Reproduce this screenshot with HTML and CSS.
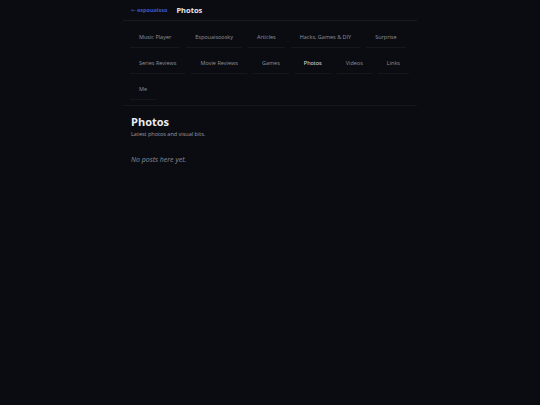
FILE: index.html
```html
<!DOCTYPE html>
<html lang="en">
<head>
<meta charset="utf-8">
<title>Photos</title>
<link rel="stylesheet" href="styles.css">
</head>
<body>
<div class="page">
  <header class="topbar">
    <a class="back" href="#"><span class="arrow">←</span> espouaisso</a>
    <span class="crumb">Photos</span>
  </header>
  <nav class="nav">
    <a class="nav-item" href="#">Music Player</a>
    <a class="nav-item" href="#">Espouaisoosky</a>
    <a class="nav-item" href="#">Articles</a>
    <a class="nav-item" href="#">Hacks, Games &amp; DIY</a>
    <a class="nav-item" href="#">Surprise</a>
    <a class="nav-item" href="#">Series Reviews</a>
    <a class="nav-item" href="#">Movie Reviews</a>
    <a class="nav-item" href="#">Games</a>
    <a class="nav-item active" href="#">Photos</a>
    <a class="nav-item" href="#">Videos</a>
    <a class="nav-item" href="#">Links</a>
    <a class="nav-item" href="#">Me</a>
  </nav>
  <main class="content">
    <h1 class="title">Photos</h1>
    <p class="subtitle">Latest photos and visual bits.</p>
    <p class="empty">No posts here yet.</p>
  </main>
</div>
</body>
</html>
```
FILE: styles.css
```css
html, body {
  margin: 0;
  padding: 0;
  background: #0b0c11;
  height: 100%;
}
body {
  font-family: "Open Sans", "Noto Sans", sans-serif;
  color: #d8d9e0;
}
a { text-decoration: none; }
.page {
  width: 294px;
  margin: 0 auto;
}
.topbar {
  height: 21px;
  display: flex;
  align-items: center;
  gap: 9px;
  padding: 0 8px;
  border-bottom: 1px solid #181a22;
  box-sizing: border-box;
}
.back {
  color: #3d57c4;
  font-size: 5.5px;
  font-weight: 700;
}
.arrow {
  font-family: "DejaVu Sans", sans-serif;
  font-weight: 400;
  font-size: 5.5px;
}
.crumb {
  color: #e8e9ee;
  font-size: 7.5px;
  font-weight: 700;
}
.nav {
  display: flex;
  flex-wrap: wrap;
  column-gap: 6px;
  row-gap: 5px;
  padding: 6px 7px 5px;
  border-bottom: 1px solid #15171e;
}
.nav-item {
  display: block;
  padding: 6px 9px;
  font-size: 5.5px;
  line-height: 8px;
  color: #8f919c;
  border-bottom: 1px solid #15171f;
}
.nav-item.active {
  color: #e4e5ea;
}
.content {
  padding: 8px 8px;
}
.title {
  margin: 0;
  font-size: 11px;
  line-height: 15px;
  font-weight: 700;
  color: #ececf1;
}
.subtitle {
  margin: 1px 0 0;
  font-size: 5.5px;
  line-height: 8px;
  color: #9a9ca7;
}
.empty {
  margin: 17px 0 0;
  font-size: 7px;
  line-height: 10px;
  font-style: italic;
  color: #8b8d99;
}
```
